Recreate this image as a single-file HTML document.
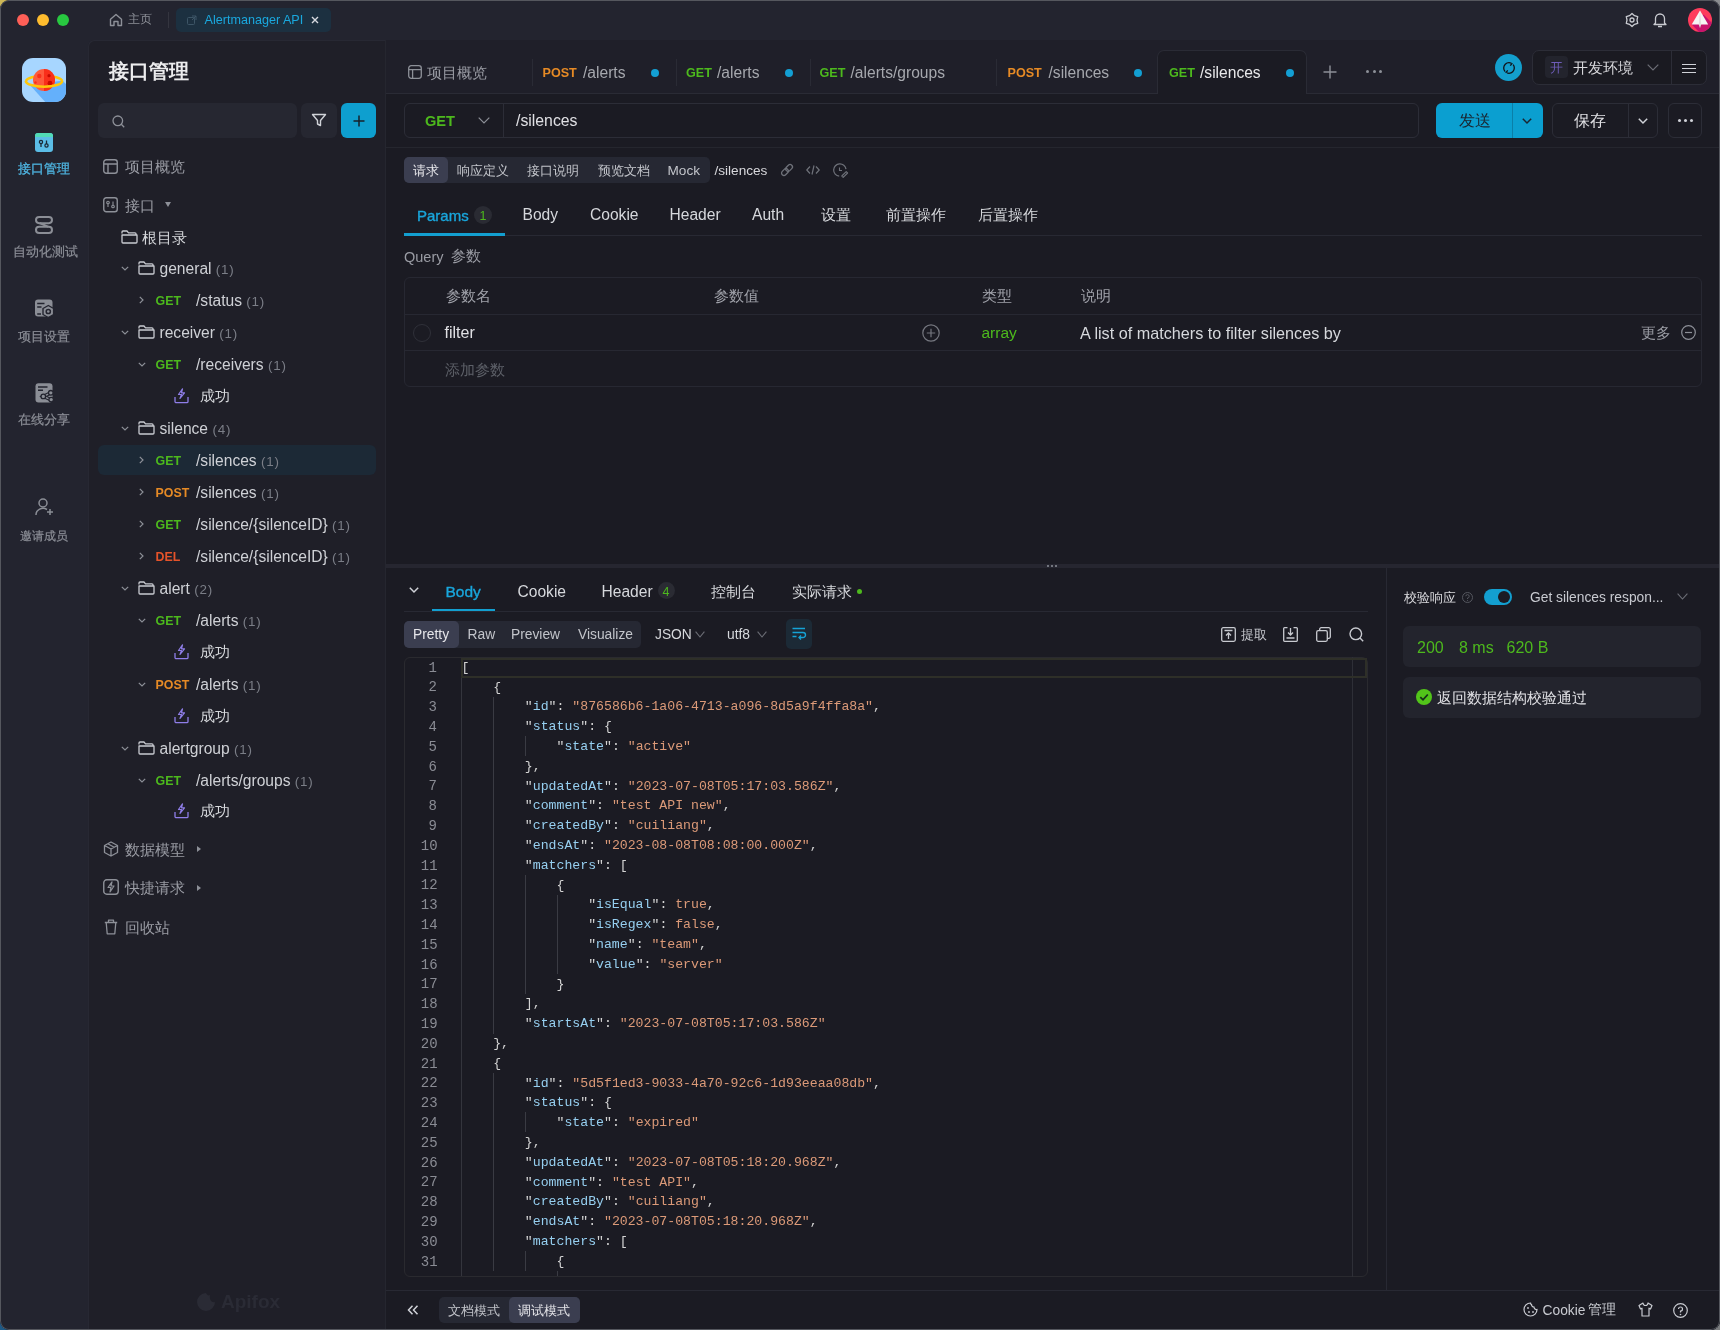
<!DOCTYPE html><html><head><meta charset="utf-8"><style>
*{box-sizing:border-box;margin:0;padding:0}
html,body{width:1720px;height:1330px;overflow:hidden;background:#2a2b33}
body{font-family:"Liberation Sans",sans-serif;color:#d0d2d8;position:relative}
.abs{position:absolute}
#win{will-change:transform;position:absolute;left:0;top:0;width:1720px;height:1330px;background:#23242f;border-radius:9px;overflow:hidden}
.t{position:absolute;white-space:nowrap;line-height:1}
svg{position:absolute;overflow:visible}
</style></head><body><div class="abs" style="left:0;top:0;width:14px;height:14px;background:#cdb757"></div>
<div class="abs" style="left:0;top:1316px;width:14px;height:14px;background:#1f5a86"></div>
<div class="abs" style="left:1706px;top:0;width:14px;height:14px;background:#8a8c90"></div>
<div class="abs" style="left:1706px;top:1316px;width:14px;height:14px;background:#7b7d80"></div>
<div id="win">
<div class="abs" style="left:17px;top:14px;width:12px;height:12px;background:#fe5f57;border-radius:6px;"></div>
<div class="abs" style="left:37px;top:14px;width:12px;height:12px;background:#febc2e;border-radius:6px;"></div>
<div class="abs" style="left:57px;top:14px;width:12px;height:12px;background:#28c840;border-radius:6px;"></div>
<svg style="left:109px;top:13px;" width="14" height="14" viewBox="0 0 14 14"><path d="M1.5 6.2 L7 1.5 L12.5 6.2 V12.5 H9 V8.5 H5 V12.5 H1.5 Z" fill="none" stroke="#8d9098" stroke-width="1.4" stroke-linejoin="round"/></svg>
<div class="t" style="left:128px;top:13.4px;font-size:12.2px;color:#8d9098;font-weight:400;">主页</div>
<div class="abs" style="left:168px;top:12px;width:1px;height:16px;background:#34353f;border-radius:0px;"></div>
<div class="abs" style="left:176px;top:8px;width:155px;height:24px;background:#1c3040;border-radius:5px;"></div>
<svg style="left:187px;top:15px;" width="10" height="10" viewBox="0 0 10 10"><rect x="0.5" y="2.5" width="7" height="7" rx="1" fill="none" stroke="#3d5566" stroke-width="1"/><path d="M5 1 H9 V5 M9 1 L5 5" fill="none" stroke="#3d5566" stroke-width="1"/></svg>
<div class="t" style="left:204.5px;top:14.4px;font-size:12.6px;color:#1aa8de;font-weight:400;">Alertmanager API</div>
<svg style="left:311px;top:16px;" width="8" height="8" viewBox="0 0 8 8"><path d="M1 1 L7 7 M7 1 L1 7" stroke="#d8dae0" stroke-width="1.4"/></svg>
<svg style="left:1625px;top:13px;" width="14" height="14" viewBox="0 0 14 14"><circle cx="7" cy="7" r="2" fill="none" stroke="#c8cad0" stroke-width="1.3"/><path d="M7.00 0.40 L9.50 2.67 L12.72 3.70 L12.00 7.00 L12.72 10.30 L9.50 11.33 L7.00 13.60 L4.50 11.33 L1.28 10.30 L2.00 7.00 L1.28 3.70 L4.50 2.67 Z" fill="none" stroke="#c8cad0" stroke-width="1.3" stroke-linejoin="round"/></svg>
<svg style="left:1653px;top:12px;" width="14" height="16" viewBox="0 0 14 16"><path d="M2.5 11 V6.5 A4.5 4.5 0 0 1 11.5 6.5 V11 L13 12.5 H1 L2.5 11 Z" fill="none" stroke="#c8cad0" stroke-width="1.3" stroke-linejoin="round"/><path d="M5 14.5 H9" stroke="#c8cad0" stroke-width="1.3"/></svg>
<svg style="left:1688px;top:8px;" width="24" height="24" viewBox="0 0 24 24"><defs><clipPath id="av"><circle cx="12" cy="12" r="12"/></clipPath></defs><g clip-path="url(#av)"><rect width="24" height="24" fill="#fe3c5c"/><path d="M3.7 16.4 L15.5 6.5 L26 17 L26 26 L13 26 Z" fill="#c8126e"/></g><path d="M12 2.5 L20.2 16.4 L3.7 16.4 Z" fill="#f6f4f4"/><path d="M12 2.5 L13.2 16.4 L12 20.3 L10.8 16.4 Z" fill="#e2dcdc"/></svg>
<div class="abs" style="left:22px;top:58px;width:44px;height:44px;border-radius:11px;background:#a7d6ff;overflow:hidden"><svg style="left:0;top:0" width="44" height="44" viewBox="0 0 44 44"><path d="M7.5 26.5 L40.5 22.8 L46 28 L46 46 L25 46 Z" fill="#64b0fb"/><path d="M4 23 A18.2 5.8 0 0 1 40.2 23" fill="none" stroke="#fec70a" stroke-width="2.6"/><circle cx="22" cy="22" r="11" fill="#fe5a3c"/><path d="M22 11 A11 11 0 0 1 22 33 Z" fill="#f92f1a"/><circle cx="17.3" cy="18" r="2.2" fill="#f8301b"/><circle cx="27" cy="17.7" r="1.6" fill="#c80a00"/><circle cx="28" cy="25.2" r="2.4" fill="#c80a00"/><circle cx="13.5" cy="24.5" r="1.2" fill="#f8301b"/><path d="M3.8 23 A18.2 5.8 0 0 0 40.2 23" fill="none" stroke="#fec70a" stroke-width="2.6"/></svg></div>
<svg style="left:35px;top:133px;" width="18" height="19" viewBox="0 0 18 19"><rect x="0" y="0" width="18" height="19" rx="3" fill="#5bbde6"/><path d="M0 3 A3 3 0 0 1 3 0 H15 A3 3 0 0 1 18 3 V4 H0 Z" fill="#51dbb5"/><circle cx="6" cy="9" r="1.6" fill="none" stroke="#1b2a36" stroke-width="1.3"/><path d="M6 10.6 V14" stroke="#1b2a36" stroke-width="1.3"/><circle cx="11.5" cy="12.5" r="1.6" fill="none" stroke="#1b2a36" stroke-width="1.3"/><path d="M11.5 7.5 V10.9" stroke="#1b2a36" stroke-width="1.3"/></svg>
<div class="t" style="left:18px;top:161.5px;font-size:13px;color:#4eb3df;font-weight:400;-webkit-text-stroke:0.3px #4eb3df;">接口管理</div>
<svg style="left:35px;top:216px;" width="18" height="18" viewBox="0 0 18 18"><rect x="1" y="1" width="16" height="6.2" rx="3.1" fill="none" stroke="#8b8e96" stroke-width="2"/><rect x="1" y="10.8" width="16" height="6.2" rx="3.1" fill="none" stroke="#8b8e96" stroke-width="2"/><path d="M4.5 7 L13.5 10.8" stroke="#8b8e96" stroke-width="2"/></svg>
<div class="t" style="left:12.5px;top:245.6px;font-size:12.8px;color:#8b8e96;font-weight:400;-webkit-text-stroke:0.2px #8b8e96;">自动化测试</div>
<svg style="left:35px;top:299px;" width="20" height="20" viewBox="0 0 20 20"><rect x="0" y="0.5" width="17.5" height="17" rx="3" fill="#8b8e96"/><path d="M2.2 4.5 H9.5 M2.2 8 H6.5 M2.2 15 H6" stroke="#23242f" stroke-width="1.5"/><path d="M13.3 6.5 L18.6 9.5 V15.5 L13.3 18.5 L8 15.5 V9.5 Z" fill="#8b8e96" stroke="#23242f" stroke-width="1.4" stroke-linejoin="round"/><circle cx="13.3" cy="12.5" r="2.1" fill="none" stroke="#23242f" stroke-width="1.5"/></svg>
<div class="t" style="left:18px;top:329.5px;font-size:13px;color:#8b8e96;font-weight:400;-webkit-text-stroke:0.2px #8b8e96;">项目设置</div>
<svg style="left:35px;top:383px;" width="20" height="20" viewBox="0 0 20 20"><rect x="0.5" y="0.3" width="17" height="19.3" rx="3" fill="#8b8e96"/><path d="M3 4 H12.5 M3 7.2 H8" stroke="#23242f" stroke-width="1.5"/><path d="M15.8 9.8 L8.5 13.4 L15.8 16.6" fill="none" stroke="#23242f" stroke-width="3.6"/><path d="M15.8 9.8 L8.5 13.4 L15.8 16.6" fill="none" stroke="#8b8e96" stroke-width="1.4"/><circle cx="15.8" cy="9.8" r="2.3" fill="#8b8e96" stroke="#23242f" stroke-width="1.3"/><circle cx="8.3" cy="13.4" r="2.3" fill="#8b8e96" stroke="#23242f" stroke-width="1.3"/><circle cx="16.2" cy="16.6" r="2.3" fill="#8b8e96" stroke="#23242f" stroke-width="1.3"/></svg>
<div class="t" style="left:18px;top:412.5px;font-size:13px;color:#8b8e96;font-weight:400;-webkit-text-stroke:0.2px #8b8e96;">在线分享</div>
<svg style="left:35px;top:498px;" width="19" height="18" viewBox="0 0 19 18"><circle cx="8" cy="5" r="4" fill="none" stroke="#8b8e96" stroke-width="1.5"/><path d="M1 17 A7 6.5 0 0 1 12 11.5" fill="none" stroke="#8b8e96" stroke-width="1.5"/><path d="M15 11 V17 M12 14 H18" stroke="#8b8e96" stroke-width="1.5"/></svg>
<div class="t" style="left:20px;top:529.5px;font-size:12px;color:#8b8e96;font-weight:400;-webkit-text-stroke:0.2px #8b8e96;">邀请成员</div>
<div class="abs" style="left:88px;top:40px;width:298px;height:1295px;background:#1f1f28;border-radius:6px 0 0 0;box-shadow:inset 1px 1px 0 #272833"></div>
<div class="t" style="left:109px;top:62.2px;font-size:19.5px;color:#ececee;font-weight:700;">接口管理</div>
<div class="abs" style="left:98px;top:103px;width:199px;height:35px;background:#262731;border-radius:6px;"></div>
<svg style="left:112px;top:115px;" width="13" height="13" viewBox="0 0 13 13"><circle cx="5.8" cy="5.8" r="4.8" fill="none" stroke="#8d9098" stroke-width="1.3"/><path d="M9.3 9.3 L12.2 12.2" stroke="#8d9098" stroke-width="1.3"/></svg>
<div class="abs" style="left:301px;top:103px;width:36px;height:35px;background:#262731;border-radius:6px;"></div>
<svg style="left:311px;top:112px;" width="16" height="16" viewBox="0 0 16 16"><path d="M1.5 2.5 H14.5 L9.5 8.5 V13.5 L6.5 12 V8.5 Z" fill="none" stroke="#d0d2d8" stroke-width="1.4" stroke-linejoin="round"/></svg>
<div class="abs" style="left:341px;top:103px;width:35px;height:35px;background:#0e9fcf;border-radius:6px;"></div>
<svg style="left:353px;top:115px;" width="12" height="12" viewBox="0 0 12 12"><path d="M6 0.5 V11.5 M0.5 6 H11.5" stroke="#17222c" stroke-width="1.5"/></svg>
<svg style="left:103px;top:159px;" width="15" height="15" viewBox="0 0 15 15"><rect x="0.75" y="0.75" width="13.5" height="13.5" rx="2.5" fill="none" stroke="#8d9098" stroke-width="1.4"/><path d="M0.75 5 H14.25 M5 5 V14.25" stroke="#8d9098" stroke-width="1.4"/></svg>
<div class="t" style="left:124.5px;top:159.0px;font-size:15px;color:#9a9ca4;font-weight:400;">项目概览</div>
<svg style="left:103px;top:197px;" width="15" height="16" viewBox="0 0 15 16"><rect x="0.75" y="0.75" width="13.5" height="14" rx="2.5" fill="none" stroke="#8d9098" stroke-width="1.4"/><circle cx="5" cy="5.5" r="1.3" fill="none" stroke="#8d9098" stroke-width="1.1"/><path d="M5 6.8 V10" stroke="#8d9098" stroke-width="1.1"/><circle cx="10" cy="9.5" r="1.3" fill="none" stroke="#8d9098" stroke-width="1.1"/><path d="M10 4.5 V8.2" stroke="#8d9098" stroke-width="1.1"/></svg>
<div class="t" style="left:124.5px;top:197.5px;font-size:15px;color:#9a9ca4;font-weight:400;">接口</div>
<svg style="left:165px;top:202px;" width="6" height="5" viewBox="0 0 6 5"><path d="M0 0 H6 L3 5 Z" fill="#8d9098"/></svg>
<svg style="left:121px;top:230px;" width="17" height="14" viewBox="0 0 17 14"><path d="M1 3.5 V2 A1 1 0 0 1 2 1 H6 L7.5 2.8 H14 A1 1 0 0 1 15 3.8 V5" fill="none" stroke="#c9cbd1" stroke-width="1.3" stroke-linejoin="round"/><path d="M1 5 H16 V12 A1 1 0 0 1 15 13 H2 A1 1 0 0 1 1 12 Z" fill="none" stroke="#c9cbd1" stroke-width="1.3" stroke-linejoin="round"/></svg>
<div class="t" style="left:142px;top:229.5px;font-size:15px;color:#d6d8dc;font-weight:400;">根目录</div>
<div class="abs" style="left:98px;top:445px;width:278px;height:30px;background:#1c2936;border-radius:6px;"></div>
<svg style="left:120.5px;top:265.5px;" width="8" height="5" viewBox="0 0 8 5"><path d="M0.8 0.8 L4 4 L7.2 0.8" fill="none" stroke="#8d9098" stroke-width="1.2"/></svg>
<svg style="left:137.5px;top:261px;" width="17" height="14" viewBox="0 0 17 14"><path d="M1 3.5 V2 A1 1 0 0 1 2 1 H6 L7.5 2.8 H14 A1 1 0 0 1 15 3.8 V5" fill="none" stroke="#c9cbd1" stroke-width="1.3" stroke-linejoin="round"/><path d="M1 5 H16 V12 A1 1 0 0 1 15 13 H2 A1 1 0 0 1 1 12 Z" fill="none" stroke="#c9cbd1" stroke-width="1.3" stroke-linejoin="round"/></svg>
<div class="t" style="left:159.5px;top:261.2px;font-size:15.6px;color:#cfd1d6">general <span style="color:#7b7e87;font-size:13.4px;letter-spacing:0.8px">(1)</span></div>
<svg style="left:139px;top:296px;" width="5" height="8" viewBox="0 0 5 8"><path d="M0.8 0.8 L4 4 L0.8 7.2" fill="none" stroke="#8d9098" stroke-width="1.2"/></svg>
<div class="t" style="left:155.5px;top:294.7px;font-size:12.4px;color:#4db91d;font-weight:700;">GET</div>
<div class="t" style="left:196px;top:293.2px;font-size:15.6px;color:#cfd1d6">/status <span style="color:#7b7e87;font-size:13.4px;letter-spacing:0.8px">(1)</span></div>
<svg style="left:120.5px;top:329.5px;" width="8" height="5" viewBox="0 0 8 5"><path d="M0.8 0.8 L4 4 L7.2 0.8" fill="none" stroke="#8d9098" stroke-width="1.2"/></svg>
<svg style="left:137.5px;top:325px;" width="17" height="14" viewBox="0 0 17 14"><path d="M1 3.5 V2 A1 1 0 0 1 2 1 H6 L7.5 2.8 H14 A1 1 0 0 1 15 3.8 V5" fill="none" stroke="#c9cbd1" stroke-width="1.3" stroke-linejoin="round"/><path d="M1 5 H16 V12 A1 1 0 0 1 15 13 H2 A1 1 0 0 1 1 12 Z" fill="none" stroke="#c9cbd1" stroke-width="1.3" stroke-linejoin="round"/></svg>
<div class="t" style="left:159.5px;top:325.2px;font-size:15.6px;color:#cfd1d6">receiver <span style="color:#7b7e87;font-size:13.4px;letter-spacing:0.8px">(1)</span></div>
<svg style="left:138px;top:361.5px;" width="8" height="5" viewBox="0 0 8 5"><path d="M0.8 0.8 L4 4 L7.2 0.8" fill="none" stroke="#8d9098" stroke-width="1.2"/></svg>
<div class="t" style="left:155.5px;top:358.7px;font-size:12.4px;color:#4db91d;font-weight:700;">GET</div>
<div class="t" style="left:196px;top:357.2px;font-size:15.6px;color:#cfd1d6">/receivers <span style="color:#7b7e87;font-size:13.4px;letter-spacing:0.8px">(1)</span></div>
<svg style="left:174px;top:388px;" width="15" height="16" viewBox="0 0 15 16"><path d="M8.5 0.8 L4.5 6.5 H7.5 L6 10.5 L10.5 4.8 H7.5 Z" fill="none" stroke="#8f7ee8" stroke-width="1.2" stroke-linejoin="round"/><path d="M1 9 V13.5 A1.2 1.2 0 0 0 2.2 14.7 H12.8 A1.2 1.2 0 0 0 14 13.5 V9" fill="none" stroke="#8f7ee8" stroke-width="1.3"/></svg>
<div class="t" style="left:199.5px;top:388.0px;font-size:15px;color:#d6d8dc;font-weight:400;">成功</div>
<svg style="left:120.5px;top:425.5px;" width="8" height="5" viewBox="0 0 8 5"><path d="M0.8 0.8 L4 4 L7.2 0.8" fill="none" stroke="#8d9098" stroke-width="1.2"/></svg>
<svg style="left:137.5px;top:421px;" width="17" height="14" viewBox="0 0 17 14"><path d="M1 3.5 V2 A1 1 0 0 1 2 1 H6 L7.5 2.8 H14 A1 1 0 0 1 15 3.8 V5" fill="none" stroke="#c9cbd1" stroke-width="1.3" stroke-linejoin="round"/><path d="M1 5 H16 V12 A1 1 0 0 1 15 13 H2 A1 1 0 0 1 1 12 Z" fill="none" stroke="#c9cbd1" stroke-width="1.3" stroke-linejoin="round"/></svg>
<div class="t" style="left:159.5px;top:421.2px;font-size:15.6px;color:#cfd1d6">silence <span style="color:#7b7e87;font-size:13.4px;letter-spacing:0.8px">(4)</span></div>
<svg style="left:139px;top:456px;" width="5" height="8" viewBox="0 0 5 8"><path d="M0.8 0.8 L4 4 L0.8 7.2" fill="none" stroke="#8d9098" stroke-width="1.2"/></svg>
<div class="t" style="left:155.5px;top:454.7px;font-size:12.4px;color:#4db91d;font-weight:700;">GET</div>
<div class="t" style="left:196px;top:453.2px;font-size:15.6px;color:#cfd1d6">/silences <span style="color:#7b7e87;font-size:13.4px;letter-spacing:0.8px">(1)</span></div>
<svg style="left:139px;top:488px;" width="5" height="8" viewBox="0 0 5 8"><path d="M0.8 0.8 L4 4 L0.8 7.2" fill="none" stroke="#8d9098" stroke-width="1.2"/></svg>
<div class="t" style="left:155.5px;top:486.7px;font-size:12.4px;color:#e68a25;font-weight:700;">POST</div>
<div class="t" style="left:196px;top:485.2px;font-size:15.6px;color:#cfd1d6">/silences <span style="color:#7b7e87;font-size:13.4px;letter-spacing:0.8px">(1)</span></div>
<svg style="left:139px;top:520px;" width="5" height="8" viewBox="0 0 5 8"><path d="M0.8 0.8 L4 4 L0.8 7.2" fill="none" stroke="#8d9098" stroke-width="1.2"/></svg>
<div class="t" style="left:155.5px;top:518.7px;font-size:12.4px;color:#4db91d;font-weight:700;">GET</div>
<div class="t" style="left:196px;top:517.2px;font-size:15.6px;color:#cfd1d6">/silence/{silenceID} <span style="color:#7b7e87;font-size:13.4px;letter-spacing:0.8px">(1)</span></div>
<svg style="left:139px;top:552px;" width="5" height="8" viewBox="0 0 5 8"><path d="M0.8 0.8 L4 4 L0.8 7.2" fill="none" stroke="#8d9098" stroke-width="1.2"/></svg>
<div class="t" style="left:155.5px;top:550.7px;font-size:12.4px;color:#e5532a;font-weight:700;">DEL</div>
<div class="t" style="left:196px;top:549.2px;font-size:15.6px;color:#cfd1d6">/silence/{silenceID} <span style="color:#7b7e87;font-size:13.4px;letter-spacing:0.8px">(1)</span></div>
<svg style="left:120.5px;top:585.5px;" width="8" height="5" viewBox="0 0 8 5"><path d="M0.8 0.8 L4 4 L7.2 0.8" fill="none" stroke="#8d9098" stroke-width="1.2"/></svg>
<svg style="left:137.5px;top:581px;" width="17" height="14" viewBox="0 0 17 14"><path d="M1 3.5 V2 A1 1 0 0 1 2 1 H6 L7.5 2.8 H14 A1 1 0 0 1 15 3.8 V5" fill="none" stroke="#c9cbd1" stroke-width="1.3" stroke-linejoin="round"/><path d="M1 5 H16 V12 A1 1 0 0 1 15 13 H2 A1 1 0 0 1 1 12 Z" fill="none" stroke="#c9cbd1" stroke-width="1.3" stroke-linejoin="round"/></svg>
<div class="t" style="left:159.5px;top:581.2px;font-size:15.6px;color:#cfd1d6">alert <span style="color:#7b7e87;font-size:13.4px;letter-spacing:0.8px">(2)</span></div>
<svg style="left:138px;top:617.5px;" width="8" height="5" viewBox="0 0 8 5"><path d="M0.8 0.8 L4 4 L7.2 0.8" fill="none" stroke="#8d9098" stroke-width="1.2"/></svg>
<div class="t" style="left:155.5px;top:614.7px;font-size:12.4px;color:#4db91d;font-weight:700;">GET</div>
<div class="t" style="left:196px;top:613.2px;font-size:15.6px;color:#cfd1d6">/alerts <span style="color:#7b7e87;font-size:13.4px;letter-spacing:0.8px">(1)</span></div>
<svg style="left:174px;top:644px;" width="15" height="16" viewBox="0 0 15 16"><path d="M8.5 0.8 L4.5 6.5 H7.5 L6 10.5 L10.5 4.8 H7.5 Z" fill="none" stroke="#8f7ee8" stroke-width="1.2" stroke-linejoin="round"/><path d="M1 9 V13.5 A1.2 1.2 0 0 0 2.2 14.7 H12.8 A1.2 1.2 0 0 0 14 13.5 V9" fill="none" stroke="#8f7ee8" stroke-width="1.3"/></svg>
<div class="t" style="left:199.5px;top:644.0px;font-size:15px;color:#d6d8dc;font-weight:400;">成功</div>
<svg style="left:138px;top:681.5px;" width="8" height="5" viewBox="0 0 8 5"><path d="M0.8 0.8 L4 4 L7.2 0.8" fill="none" stroke="#8d9098" stroke-width="1.2"/></svg>
<div class="t" style="left:155.5px;top:678.7px;font-size:12.4px;color:#e68a25;font-weight:700;">POST</div>
<div class="t" style="left:196px;top:677.2px;font-size:15.6px;color:#cfd1d6">/alerts <span style="color:#7b7e87;font-size:13.4px;letter-spacing:0.8px">(1)</span></div>
<svg style="left:174px;top:708px;" width="15" height="16" viewBox="0 0 15 16"><path d="M8.5 0.8 L4.5 6.5 H7.5 L6 10.5 L10.5 4.8 H7.5 Z" fill="none" stroke="#8f7ee8" stroke-width="1.2" stroke-linejoin="round"/><path d="M1 9 V13.5 A1.2 1.2 0 0 0 2.2 14.7 H12.8 A1.2 1.2 0 0 0 14 13.5 V9" fill="none" stroke="#8f7ee8" stroke-width="1.3"/></svg>
<div class="t" style="left:199.5px;top:708.0px;font-size:15px;color:#d6d8dc;font-weight:400;">成功</div>
<svg style="left:120.5px;top:745.5px;" width="8" height="5" viewBox="0 0 8 5"><path d="M0.8 0.8 L4 4 L7.2 0.8" fill="none" stroke="#8d9098" stroke-width="1.2"/></svg>
<svg style="left:137.5px;top:741px;" width="17" height="14" viewBox="0 0 17 14"><path d="M1 3.5 V2 A1 1 0 0 1 2 1 H6 L7.5 2.8 H14 A1 1 0 0 1 15 3.8 V5" fill="none" stroke="#c9cbd1" stroke-width="1.3" stroke-linejoin="round"/><path d="M1 5 H16 V12 A1 1 0 0 1 15 13 H2 A1 1 0 0 1 1 12 Z" fill="none" stroke="#c9cbd1" stroke-width="1.3" stroke-linejoin="round"/></svg>
<div class="t" style="left:159.5px;top:741.2px;font-size:15.6px;color:#cfd1d6">alertgroup <span style="color:#7b7e87;font-size:13.4px;letter-spacing:0.8px">(1)</span></div>
<svg style="left:138px;top:777.5px;" width="8" height="5" viewBox="0 0 8 5"><path d="M0.8 0.8 L4 4 L7.2 0.8" fill="none" stroke="#8d9098" stroke-width="1.2"/></svg>
<div class="t" style="left:155.5px;top:774.7px;font-size:12.4px;color:#4db91d;font-weight:700;">GET</div>
<div class="t" style="left:196px;top:773.2px;font-size:15.6px;color:#cfd1d6">/alerts/groups <span style="color:#7b7e87;font-size:13.4px;letter-spacing:0.8px">(1)</span></div>
<svg style="left:174px;top:803px;" width="15" height="16" viewBox="0 0 15 16"><path d="M8.5 0.8 L4.5 6.5 H7.5 L6 10.5 L10.5 4.8 H7.5 Z" fill="none" stroke="#8f7ee8" stroke-width="1.2" stroke-linejoin="round"/><path d="M1 9 V13.5 A1.2 1.2 0 0 0 2.2 14.7 H12.8 A1.2 1.2 0 0 0 14 13.5 V9" fill="none" stroke="#8f7ee8" stroke-width="1.3"/></svg>
<div class="t" style="left:199.5px;top:803.0px;font-size:15px;color:#d6d8dc;font-weight:400;">成功</div>
<svg style="left:103px;top:841px;" width="16" height="16" viewBox="0 0 16 16"><path d="M8 1 L14.5 4.5 V11.5 L8 15 L1.5 11.5 V4.5 Z M1.5 4.5 L8 8 L14.5 4.5 M8 8 V15 M4.8 2.8 L11.2 6.3" fill="none" stroke="#8d9098" stroke-width="1.3" stroke-linejoin="round"/></svg>
<div class="t" style="left:124.5px;top:841.5px;font-size:15px;color:#9a9ca4;font-weight:400;">数据模型</div>
<svg style="left:197px;top:846px;" width="4" height="6" viewBox="0 0 4 6"><path d="M0 0 L4 3 L0 6 Z" fill="#8d9098"/></svg>
<svg style="left:103px;top:879px;" width="16" height="16" viewBox="0 0 16 16"><rect x="0.75" y="0.75" width="14.5" height="14.5" rx="3" fill="none" stroke="#8d9098" stroke-width="1.4"/><path d="M9 2.8 L5 8.5 H8 L7 13 L11 7 H8 Z" fill="none" stroke="#8d9098" stroke-width="1.2" stroke-linejoin="round"/></svg>
<div class="t" style="left:124.5px;top:880.0px;font-size:15px;color:#9a9ca4;font-weight:400;">快捷请求</div>
<svg style="left:197px;top:884.5px;" width="4" height="6" viewBox="0 0 4 6"><path d="M0 0 L4 3 L0 6 Z" fill="#8d9098"/></svg>
<svg style="left:104px;top:919px;" width="14" height="16" viewBox="0 0 14 16"><path d="M0.8 3.5 H13.2 M4.5 3.5 V1.2 H9.5 V3.5 M2.2 3.5 L3.2 14.8 H10.8 L11.8 3.5" fill="none" stroke="#8d9098" stroke-width="1.3" stroke-linejoin="round"/></svg>
<div class="t" style="left:124.5px;top:919.5px;font-size:15px;color:#9a9ca4;font-weight:400;">回收站</div>
<svg style="left:195px;top:1291px;" width="22" height="20" viewBox="0 0 22 20"><path d="M11 2 A9 9 0 1 0 20 11 C17 12 14 9 15 4 C13.5 5 12 4 11 2 Z" fill="#2a2b35"/></svg>
<div class="t" style="left:221px;top:1291.7px;font-size:19px;color:#2a2b35;font-weight:700;">Apifox</div>
<div class="abs" style="left:385px;top:40px;width:1335px;height:1290px;background:#1b1b23;border-left:1px solid #25262f"></div>
<div class="abs" style="left:386px;top:40px;width:1334px;height:53px;background:#1f1f29;border-radius:0px;"></div>
<div class="abs" style="left:386px;top:93px;width:1334px;height:1px;background:#2a2b35;border-radius:0px;"></div>
<svg style="left:408px;top:65px;" width="14" height="14" viewBox="0 0 14 14"><rect x="0.7" y="0.7" width="12.6" height="12.6" rx="2.5" fill="none" stroke="#8d9098" stroke-width="1.3"/><path d="M0.7 4.6 H13.3 M4.6 4.6 V13.3" stroke="#8d9098" stroke-width="1.3"/></svg>
<div class="t" style="left:427px;top:64.5px;font-size:15px;color:#9a9ca4;font-weight:400;">项目概览</div>
<div class="abs" style="left:531.5px;top:59px;width:1px;height:27px;background:#2a2b35;border-radius:0px;"></div>
<div class="abs" style="left:675.5px;top:59px;width:1px;height:27px;background:#2a2b35;border-radius:0px;"></div>
<div class="abs" style="left:809.5px;top:59px;width:1px;height:27px;background:#2a2b35;border-radius:0px;"></div>
<div class="abs" style="left:996px;top:59px;width:1px;height:27px;background:#2a2b35;border-radius:0px;"></div>
<div class="t" style="left:542.5px;top:66.9px;font-size:12.6px;color:#e68a25;font-weight:700;">POST</div>
<div class="t" style="left:583px;top:64.9px;font-size:15.6px;color:#a6a8ae;font-weight:400;">/alerts</div>
<div class="abs" style="left:651px;top:69px;width:8px;height:8px;background:#139fd3;border-radius:4px;"></div>
<div class="t" style="left:686px;top:66.9px;font-size:12.6px;color:#4db91d;font-weight:700;">GET</div>
<div class="t" style="left:717px;top:64.9px;font-size:15.6px;color:#a6a8ae;font-weight:400;">/alerts</div>
<div class="abs" style="left:785px;top:69px;width:8px;height:8px;background:#139fd3;border-radius:4px;"></div>
<div class="t" style="left:819.5px;top:66.9px;font-size:12.6px;color:#4db91d;font-weight:700;">GET</div>
<div class="t" style="left:850.5px;top:64.9px;font-size:15.6px;color:#a6a8ae;font-weight:400;">/alerts/groups</div>
<div class="abs" style="left:9995px;top:69px;width:8px;height:8px;background:#139fd3;border-radius:4px;"></div>
<div class="t" style="left:1007.5px;top:66.9px;font-size:12.6px;color:#e68a25;font-weight:700;">POST</div>
<div class="t" style="left:1048.5px;top:64.9px;font-size:15.6px;color:#a6a8ae;font-weight:400;">/silences</div>
<div class="abs" style="left:1134px;top:69px;width:8px;height:8px;background:#139fd3;border-radius:4px;"></div>
<div class="abs" style="left:1157px;top:50px;width:150px;height:44px;background:#1b1b23;border:1px solid #2a2b35;border-bottom:none;border-radius:7px 7px 0 0"></div>
<div class="t" style="left:1169px;top:66.9px;font-size:12.6px;color:#4db91d;font-weight:700;">GET</div>
<div class="t" style="left:1200px;top:64.9px;font-size:15.6px;color:#e8e8ea;font-weight:400;">/silences</div>
<div class="abs" style="left:1286px;top:69px;width:8px;height:8px;background:#139fd3;border-radius:4px;"></div>
<svg style="left:1323px;top:65px;" width="14" height="14" viewBox="0 0 14 14"><path d="M7 0.5 V13.5 M0.5 7 H13.5" stroke="#8d9098" stroke-width="1.4"/></svg>
<div class="abs" style="left:1366.0px;top:70px;width:3px;height:3px;background:#8d9098;border-radius:1.5px;"></div>
<div class="abs" style="left:1372.5px;top:70px;width:3px;height:3px;background:#8d9098;border-radius:1.5px;"></div>
<div class="abs" style="left:1379.0px;top:70px;width:3px;height:3px;background:#8d9098;border-radius:1.5px;"></div>
<div class="abs" style="left:1495px;top:54px;width:27px;height:27px;background:#139fcd;border-radius:13.5px;"></div>
<svg style="left:1502px;top:60.5px;" width="14" height="14" viewBox="0 0 14 14"><circle cx="7" cy="7" r="5.3" fill="none" stroke="#111318" stroke-width="1.3" stroke-dasharray="10.1 2.2 14.45 2.2 4.35 0"/><path d="M10.3 2.1 L8.3 4.7 M3.7 11.9 L5.7 9.3" stroke="#111318" stroke-width="1.3"/></svg>
<div class="abs" style="left:1532px;top:50px;width:175px;height:35px;background:#1a1a21;border:1px solid #2c2d37;border-radius:7px"></div>
<div class="abs" style="left:1671px;top:51px;width:1px;height:33px;background:#2c2d37;border-radius:0px;"></div>
<div class="abs" style="left:1544.5px;top:56px;width:23px;height:22px;background:#23242d;border-radius:4px;"></div>
<div class="t" style="left:1549.5px;top:60.5px;font-size:13px;color:#6e5cb8;font-weight:400;">开</div>
<div class="t" style="left:1573px;top:59.9px;font-size:15.2px;color:#d8d8dc;font-weight:400;">开发环境</div>
<svg style="left:1647px;top:63.5px;" width="12" height="7" viewBox="0 0 12 7"><path d="M0.7 0.7 L6 6 L11.3 0.7" fill="none" stroke="#6c6e76" stroke-width="1.2"/></svg>
<div class="abs" style="left:1682px;top:63.5px;width:14px;height:1.6px;background:#d0d2d8;border-radius:0px;"></div>
<div class="abs" style="left:1682px;top:67.5px;width:14px;height:1.6px;background:#d0d2d8;border-radius:0px;"></div>
<div class="abs" style="left:1682px;top:71.5px;width:14px;height:1.6px;background:#d0d2d8;border-radius:0px;"></div>
<div class="abs" style="left:404px;top:103px;width:1015px;height:35px;border:1px solid #2c2d37;border-radius:6px"></div>
<div class="abs" style="left:503px;top:104px;width:1px;height:33px;background:#2c2d37;border-radius:0px;"></div>
<div class="t" style="left:425px;top:113.9px;font-size:14.6px;color:#4db91d;font-weight:700;">GET</div>
<svg style="left:478px;top:116.5px;" width="12" height="7" viewBox="0 0 12 7"><path d="M0.7 0.7 L6 6 L11.3 0.7" fill="none" stroke="#8d9098" stroke-width="1.2"/></svg>
<div class="t" style="left:516px;top:113.3px;font-size:15.8px;color:#e0e0e4;font-weight:400;">/silences</div>
<div class="abs" style="left:1436px;top:103px;width:107px;height:35px;background:#0b9fd0;border-radius:6px;"></div>
<div class="abs" style="left:1512px;top:103px;width:1px;height:35px;background:#0a7fa8;border-radius:0px;"></div>
<div class="t" style="left:1459px;top:112.8px;font-size:15.5px;color:#1a2530;font-weight:400;">发送</div>
<svg style="left:1522px;top:117.5px;" width="10" height="6" viewBox="0 0 10 6"><path d="M0.8 0.8 L5 5 L9.2 0.8" fill="none" stroke="#1a2530" stroke-width="1.5"/></svg>
<div class="abs" style="left:1552px;top:103px;width:106px;height:35px;border:1px solid #2c2d37;border-radius:6px"></div>
<div class="abs" style="left:1628px;top:104px;width:1px;height:33px;background:#2c2d37;border-radius:0px;"></div>
<div class="t" style="left:1574px;top:112.8px;font-size:15.5px;color:#e0e0e4;font-weight:400;">保存</div>
<svg style="left:1638px;top:117.5px;" width="10" height="6" viewBox="0 0 10 6"><path d="M0.8 0.8 L5 5 L9.2 0.8" fill="none" stroke="#d0d2d8" stroke-width="1.5"/></svg>
<div class="abs" style="left:1668px;top:103px;width:34px;height:35px;border:1px solid #2c2d37;border-radius:6px"></div>
<div class="abs" style="left:1677.5px;top:119px;width:3.2px;height:3.2px;background:#d0d2d8;border-radius:1.6px;"></div>
<div class="abs" style="left:1683.5px;top:119px;width:3.2px;height:3.2px;background:#d0d2d8;border-radius:1.6px;"></div>
<div class="abs" style="left:1689.5px;top:119px;width:3.2px;height:3.2px;background:#d0d2d8;border-radius:1.6px;"></div>
<div class="abs" style="left:386px;top:147px;width:1334px;height:1px;background:#25262e;border-radius:0px;"></div>
<div class="abs" style="left:404px;top:157px;width:306px;height:26px;background:#262833;border-radius:5px;"></div>
<div class="abs" style="left:404px;top:157px;width:44px;height:26px;background:#3b3e50;border-radius:5px;"></div>
<div class="t" style="left:412.5px;top:163.5px;font-size:13px;color:#e6e6ea;font-weight:400;">请求</div>
<div class="t" style="left:456.5px;top:163.5px;font-size:13px;color:#c2c4ca;font-weight:400;">响应定义</div>
<div class="t" style="left:527px;top:163.5px;font-size:13px;color:#c2c4ca;font-weight:400;">接口说明</div>
<div class="t" style="left:597.5px;top:163.5px;font-size:13px;color:#c2c4ca;font-weight:400;">预览文档</div>
<div class="t" style="left:667.5px;top:163.9px;font-size:13.6px;color:#c2c4ca;font-weight:400;">Mock</div>
<div class="t" style="left:714.5px;top:163.9px;font-size:13.6px;color:#d8d8dc;font-weight:400;">/silences</div>
<svg style="left:780px;top:162.5px;" width="14" height="14" viewBox="0 0 14 14"><g transform="rotate(-45 7 7)" fill="none" stroke="#6f727a" stroke-width="1.3"><rect x="0.3" y="4.6" width="7.6" height="4.8" rx="2.4"/><rect x="6.1" y="4.6" width="7.6" height="4.8" rx="2.4"/></g></svg>
<svg style="left:806px;top:164px;" width="14" height="12" viewBox="0 0 14 12"><path d="M4 2.5 L0.8 6 L4 9.5 M10 2.5 L13.2 6 L10 9.5 M8 1.5 L6 10.5" fill="none" stroke="#6f727a" stroke-width="1.2"/></svg>
<svg style="left:833px;top:162.5px;" width="14" height="14" viewBox="0 0 14 14"><path d="M6.2 13.2 A6.2 6.2 0 1 1 13 6.2" fill="none" stroke="#6f727a" stroke-width="1.2"/><path d="M6.5 4.5 V7.5 H9" fill="none" stroke="#6f727a" stroke-width="1.1"/><path d="M8.8 13 L13.2 8.6 L14.6 10 L10.2 14.4 Z" fill="none" stroke="#6f727a" stroke-width="1.1" stroke-linejoin="round"/></svg>
<div class="t" style="left:417px;top:207.7px;font-size:15px;color:#19a6dc;font-weight:400;-webkit-text-stroke:0.35px #19a6dc;">Params</div>
<div class="abs" style="left:474px;top:205.5px;width:18px;height:18px;background:#2a2b33;border-radius:9px;"></div>
<div class="t" style="left:479.5px;top:209.9px;font-size:12.5px;color:#4db91d;font-weight:400;">1</div>
<div class="abs" style="left:404px;top:233px;width:101px;height:3px;background:#139fd0;border-radius:0px;"></div>
<div class="abs" style="left:505px;top:235px;width:1197px;height:1px;background:#282933;border-radius:0px;"></div>
<div class="t" style="left:522.5px;top:207.4px;font-size:15.6px;color:#d6d8dc;font-weight:400;">Body</div>
<div class="t" style="left:590px;top:207.4px;font-size:15.6px;color:#d6d8dc;font-weight:400;">Cookie</div>
<div class="t" style="left:669.5px;top:207.4px;font-size:15.6px;color:#d6d8dc;font-weight:400;">Header</div>
<div class="t" style="left:752px;top:207.4px;font-size:15.6px;color:#d6d8dc;font-weight:400;">Auth</div>
<div class="t" style="left:820.5px;top:206.8px;font-size:15.3px;color:#d6d8dc;font-weight:400;">设置</div>
<div class="t" style="left:886px;top:206.8px;font-size:15.3px;color:#d6d8dc;font-weight:400;">前置操作</div>
<div class="t" style="left:978px;top:206.8px;font-size:15.3px;color:#d6d8dc;font-weight:400;">后置操作</div>
<div class="t" style="left:404px;top:249.9px;font-size:14.5px;color:#9a9ca4;font-weight:400;">Query</div>
<div class="t" style="left:451px;top:249.2px;font-size:14.5px;color:#9a9ca4;font-weight:400;">参数</div>
<div class="abs" style="left:404px;top:277px;width:1298px;height:110px;border:1px solid #272832;border-radius:6px"></div>
<div class="abs" style="left:405px;top:314px;width:1296px;height:1px;background:#272832;border-radius:0px;"></div>
<div class="abs" style="left:405px;top:350px;width:1296px;height:1px;background:#272832;border-radius:0px;"></div>
<div class="t" style="left:445.5px;top:289.2px;font-size:14.6px;color:#a0a2aa;font-weight:400;">参数名</div>
<div class="t" style="left:713.5px;top:289.2px;font-size:14.6px;color:#a0a2aa;font-weight:400;">参数值</div>
<div class="t" style="left:981.5px;top:289.2px;font-size:14.6px;color:#a0a2aa;font-weight:400;">类型</div>
<div class="t" style="left:1081px;top:289.2px;font-size:14.6px;color:#a0a2aa;font-weight:400;">说明</div>
<div class="abs" style="left:413px;top:324px;width:18px;height:18px;background:none;border-radius:9px;border:1px solid #2f3039;"></div>
<div class="t" style="left:444.5px;top:325.2px;font-size:16px;color:#e0e0e4;font-weight:400;">filter</div>
<svg style="left:922px;top:324px;" width="18" height="18" viewBox="0 0 18 18"><circle cx="9" cy="9" r="8.2" fill="none" stroke="#75777f" stroke-width="1.2"/><path d="M9 4.8 V13.2 M4.8 9 H13.2" stroke="#75777f" stroke-width="1.2"/></svg>
<div class="t" style="left:981.5px;top:325.4px;font-size:15.5px;color:#4db91d;font-weight:400;">array</div>
<div class="t" style="left:1080px;top:325.1px;font-size:16.2px;color:#d6d8dc;font-weight:400;">A list of matchers to filter silences by</div>
<div class="t" style="left:1641px;top:325.0px;font-size:15px;color:#9a9ca4;font-weight:400;">更多</div>
<svg style="left:1681px;top:324.5px;" width="15" height="15" viewBox="0 0 15 15"><circle cx="7.5" cy="7.5" r="6.8" fill="none" stroke="#8d9098" stroke-width="1.2"/><path d="M4 7.5 H11" stroke="#8d9098" stroke-width="1.2"/></svg>
<div class="t" style="left:444.5px;top:362.0px;font-size:15px;color:#5d6068;font-weight:400;">添加参数</div>
<div class="abs" style="left:386px;top:564px;width:1334px;height:4px;background:#262630;border-radius:0px;"></div>
<div class="abs" style="left:1047px;top:565px;width:2px;height:2px;background:#8d9098;border-radius:1px;"></div>
<div class="abs" style="left:1051px;top:565px;width:2px;height:2px;background:#8d9098;border-radius:1px;"></div>
<div class="abs" style="left:1055px;top:565px;width:2px;height:2px;background:#8d9098;border-radius:1px;"></div>
<svg style="left:409px;top:586.5px;" width="10" height="6" viewBox="0 0 10 6"><path d="M0.8 0.8 L5 5 L9.2 0.8" fill="none" stroke="#d0d2d8" stroke-width="1.5"/></svg>
<div class="t" style="left:445.5px;top:584.0px;font-size:15.5px;color:#19a6dc;font-weight:400;-webkit-text-stroke:0.35px #19a6dc;">Body</div>
<div class="abs" style="left:432px;top:609px;width:63px;height:3px;background:#139fd0;border-radius:0px;"></div>
<div class="abs" style="left:404px;top:611px;width:964px;height:1px;background:#282933;border-radius:0px;"></div>
<div class="t" style="left:517.5px;top:583.9px;font-size:15.6px;color:#d6d8dc;font-weight:400;">Cookie</div>
<div class="t" style="left:601.5px;top:583.9px;font-size:15.6px;color:#d6d8dc;font-weight:400;">Header</div>
<div class="abs" style="left:658px;top:582px;width:17px;height:17px;background:#2a2b33;border-radius:8.5px;"></div>
<div class="t" style="left:662.5px;top:585.5px;font-size:12.5px;color:#4db91d;font-weight:400;">4</div>
<div class="t" style="left:711px;top:583.5px;font-size:15px;color:#d6d8dc;font-weight:400;">控制台</div>
<div class="t" style="left:792px;top:583.5px;font-size:15px;color:#d6d8dc;font-weight:400;">实际请求</div>
<div class="abs" style="left:857px;top:588.5px;width:5px;height:5px;background:#4db91d;border-radius:2.5px;"></div>
<div class="abs" style="left:404px;top:621px;width:237px;height:27px;background:#262833;border-radius:5px;"></div>
<div class="abs" style="left:404px;top:621px;width:55px;height:27px;background:#3b3e50;border-radius:5px;"></div>
<div class="t" style="left:413px;top:628.3px;font-size:13.8px;color:#e6e6ea;font-weight:400;">Pretty</div>
<div class="t" style="left:467.5px;top:628.3px;font-size:13.8px;color:#c2c4ca;font-weight:400;">Raw</div>
<div class="t" style="left:511px;top:628.3px;font-size:13.8px;color:#c2c4ca;font-weight:400;">Preview</div>
<div class="t" style="left:578px;top:628.3px;font-size:13.8px;color:#c2c4ca;font-weight:400;">Visualize</div>
<div class="t" style="left:655px;top:628.3px;font-size:13.8px;color:#d6d8dc;font-weight:400;">JSON</div>
<svg style="left:695px;top:630.5px;" width="10" height="7" viewBox="0 0 10 7"><path d="M0.6 0.6 L5 6 L9.4 0.6" fill="none" stroke="#6c6e76" stroke-width="1.1"/></svg>
<div class="t" style="left:727px;top:628.3px;font-size:13.8px;color:#d6d8dc;font-weight:400;">utf8</div>
<svg style="left:757px;top:630.5px;" width="10" height="7" viewBox="0 0 10 7"><path d="M0.6 0.6 L5 6 L9.4 0.6" fill="none" stroke="#6c6e76" stroke-width="1.1"/></svg>
<div class="abs" style="left:786px;top:619px;width:26px;height:30px;background:#1c2a36;border-radius:5px;"></div>
<svg style="left:792px;top:627px;" width="14" height="13" viewBox="0 0 14 13"><path d="M0.5 1.5 H13 M0.5 5.5 H11 A2.5 2.5 0 0 1 11 10.5 H7.5 M0.5 9.5 H4.5" fill="none" stroke="#15a3d6" stroke-width="1.4"/><path d="M9 8.5 L7 10.5 L9 12.5" fill="none" stroke="#15a3d6" stroke-width="1.3"/></svg>
<svg style="left:1221px;top:627px;" width="15" height="15" viewBox="0 0 15 15"><rect x="0.7" y="0.7" width="13.6" height="13.6" rx="1.5" fill="none" stroke="#c8cad0" stroke-width="1.3"/><path d="M3.5 3.5 H11.5 M7.5 12 V6 M5 8.5 L7.5 6 L10 8.5" fill="none" stroke="#c8cad0" stroke-width="1.3"/></svg>
<div class="t" style="left:1240.5px;top:628.8px;font-size:12.5px;color:#c8cad0;font-weight:400;">提取</div>
<svg style="left:1283px;top:627px;" width="15" height="15" viewBox="0 0 15 15"><path d="M4.5 0.7 H1.5 A0.8 0.8 0 0 0 0.7 1.5 V13.5 A0.8 0.8 0 0 0 1.5 14.3 H13.5 A0.8 0.8 0 0 0 14.3 13.5 V1.5 A0.8 0.8 0 0 0 13.5 0.7 H10.5" fill="none" stroke="#c8cad0" stroke-width="1.3"/><path d="M7.5 1 V8 M5 5.5 L7.5 8 L10 5.5 M3.5 11 H11.5" fill="none" stroke="#c8cad0" stroke-width="1.3"/></svg>
<svg style="left:1316px;top:627px;" width="15" height="15" viewBox="0 0 15 15"><rect x="0.7" y="3.7" width="10.6" height="10.6" rx="1.5" fill="none" stroke="#c8cad0" stroke-width="1.3"/><path d="M3.7 3.7 V2.2 A1.5 1.5 0 0 1 5.2 0.7 H12.8 A1.5 1.5 0 0 1 14.3 2.2 V9.8 A1.5 1.5 0 0 1 12.8 11.3 H11.3" fill="none" stroke="#c8cad0" stroke-width="1.3"/></svg>
<svg style="left:1349px;top:627px;" width="15" height="15" viewBox="0 0 15 15"><circle cx="6.8" cy="6.8" r="5.8" fill="none" stroke="#c8cad0" stroke-width="1.4"/><path d="M11 11 L14.2 14.2" stroke="#c8cad0" stroke-width="1.4"/></svg>
<div class="abs" style="left:404px;top:657px;width:964px;height:620px;border:1px solid #2a2a2f;border-radius:6px"></div>
<div class="abs" style="left:461px;top:677px;width:1px;height:599px;background:#34353d;border-radius:0px;"></div>
<div class="abs" style="left:1352px;top:657px;width:1px;height:620px;background:#2e2f37;border-radius:0px;"></div>
<div class="abs" style="left:461px;top:658px;width:906px;height:20px;border:2px solid #2e2f28"></div>
<div class="abs" style="left:493px;top:697px;width:1px;height:337px;background:#3a3b43;border-radius:0px;"></div>
<div class="abs" style="left:525px;top:736px;width:1px;height:20px;background:#3a3b43;border-radius:0px;"></div>
<div class="abs" style="left:525px;top:875px;width:1px;height:119px;background:#3a3b43;border-radius:0px;"></div>
<div class="abs" style="left:557px;top:895px;width:1px;height:79px;background:#3a3b43;border-radius:0px;"></div>
<div class="abs" style="left:493px;top:1073px;width:1px;height:198px;background:#3a3b43;border-radius:0px;"></div>
<div class="abs" style="left:525px;top:1112px;width:1px;height:20px;background:#3a3b43;border-radius:0px;"></div>
<div class="abs" style="left:525px;top:1251px;width:1px;height:20px;background:#3a3b43;border-radius:0px;"></div>
<div class="abs" style="left:557px;top:1271px;width:1px;height:5px;background:#3a3b43;border-radius:0px;"></div>
<div class="t" style="left:428.4px;top:660.5px;font-size:14px;color:#8a8c94;font-family:'Liberation Mono',monospace">1</div>
<div class="t" style="left:461.5px;top:660.8px;font-size:13.2px;color:#d4d4d4;font-family:'Liberation Mono',monospace;white-space:pre">[</div>
<div class="t" style="left:428.4px;top:680.3px;font-size:14px;color:#8a8c94;font-family:'Liberation Mono',monospace">2</div>
<div class="t" style="left:461.5px;top:680.6px;font-size:13.2px;color:#d4d4d4;font-family:'Liberation Mono',monospace;white-space:pre">    {</div>
<div class="t" style="left:428.4px;top:700.1px;font-size:14px;color:#8a8c94;font-family:'Liberation Mono',monospace">3</div>
<div class="t" style="left:461.5px;top:700.4px;font-size:13.2px;color:#d4d4d4;font-family:'Liberation Mono',monospace;white-space:pre">        <span style="color:#d4d4d4">&quot;</span><span style="color:#96cff0">id</span><span style="color:#d4d4d4">&quot;</span>: <span style="color:#dc9a78">&quot;876586b6-1a06-4713-a096-8d5a9f4ffa8a&quot;</span>,</div>
<div class="t" style="left:428.4px;top:719.9px;font-size:14px;color:#8a8c94;font-family:'Liberation Mono',monospace">4</div>
<div class="t" style="left:461.5px;top:720.2px;font-size:13.2px;color:#d4d4d4;font-family:'Liberation Mono',monospace;white-space:pre">        <span style="color:#d4d4d4">&quot;</span><span style="color:#96cff0">status</span><span style="color:#d4d4d4">&quot;</span>: {</div>
<div class="t" style="left:428.4px;top:739.7px;font-size:14px;color:#8a8c94;font-family:'Liberation Mono',monospace">5</div>
<div class="t" style="left:461.5px;top:740.0px;font-size:13.2px;color:#d4d4d4;font-family:'Liberation Mono',monospace;white-space:pre">            <span style="color:#d4d4d4">&quot;</span><span style="color:#96cff0">state</span><span style="color:#d4d4d4">&quot;</span>: <span style="color:#dc9a78">&quot;active&quot;</span></div>
<div class="t" style="left:428.4px;top:759.5px;font-size:14px;color:#8a8c94;font-family:'Liberation Mono',monospace">6</div>
<div class="t" style="left:461.5px;top:759.8px;font-size:13.2px;color:#d4d4d4;font-family:'Liberation Mono',monospace;white-space:pre">        },</div>
<div class="t" style="left:428.4px;top:779.3px;font-size:14px;color:#8a8c94;font-family:'Liberation Mono',monospace">7</div>
<div class="t" style="left:461.5px;top:779.6px;font-size:13.2px;color:#d4d4d4;font-family:'Liberation Mono',monospace;white-space:pre">        <span style="color:#d4d4d4">&quot;</span><span style="color:#96cff0">updatedAt</span><span style="color:#d4d4d4">&quot;</span>: <span style="color:#dc9a78">&quot;2023-07-08T05:17:03.586Z&quot;</span>,</div>
<div class="t" style="left:428.4px;top:799.1px;font-size:14px;color:#8a8c94;font-family:'Liberation Mono',monospace">8</div>
<div class="t" style="left:461.5px;top:799.4px;font-size:13.2px;color:#d4d4d4;font-family:'Liberation Mono',monospace;white-space:pre">        <span style="color:#d4d4d4">&quot;</span><span style="color:#96cff0">comment</span><span style="color:#d4d4d4">&quot;</span>: <span style="color:#dc9a78">&quot;test API new&quot;</span>,</div>
<div class="t" style="left:428.4px;top:818.9px;font-size:14px;color:#8a8c94;font-family:'Liberation Mono',monospace">9</div>
<div class="t" style="left:461.5px;top:819.2px;font-size:13.2px;color:#d4d4d4;font-family:'Liberation Mono',monospace;white-space:pre">        <span style="color:#d4d4d4">&quot;</span><span style="color:#96cff0">createdBy</span><span style="color:#d4d4d4">&quot;</span>: <span style="color:#dc9a78">&quot;cuiliang&quot;</span>,</div>
<div class="t" style="left:420.8px;top:838.7px;font-size:14px;color:#8a8c94;font-family:'Liberation Mono',monospace">10</div>
<div class="t" style="left:461.5px;top:839.0px;font-size:13.2px;color:#d4d4d4;font-family:'Liberation Mono',monospace;white-space:pre">        <span style="color:#d4d4d4">&quot;</span><span style="color:#96cff0">endsAt</span><span style="color:#d4d4d4">&quot;</span>: <span style="color:#dc9a78">&quot;2023-08-08T08:08:00.000Z&quot;</span>,</div>
<div class="t" style="left:420.8px;top:858.5px;font-size:14px;color:#8a8c94;font-family:'Liberation Mono',monospace">11</div>
<div class="t" style="left:461.5px;top:858.8px;font-size:13.2px;color:#d4d4d4;font-family:'Liberation Mono',monospace;white-space:pre">        <span style="color:#d4d4d4">&quot;</span><span style="color:#96cff0">matchers</span><span style="color:#d4d4d4">&quot;</span>: [</div>
<div class="t" style="left:420.8px;top:878.3px;font-size:14px;color:#8a8c94;font-family:'Liberation Mono',monospace">12</div>
<div class="t" style="left:461.5px;top:878.6px;font-size:13.2px;color:#d4d4d4;font-family:'Liberation Mono',monospace;white-space:pre">            {</div>
<div class="t" style="left:420.8px;top:898.1px;font-size:14px;color:#8a8c94;font-family:'Liberation Mono',monospace">13</div>
<div class="t" style="left:461.5px;top:898.4px;font-size:13.2px;color:#d4d4d4;font-family:'Liberation Mono',monospace;white-space:pre">                <span style="color:#d4d4d4">&quot;</span><span style="color:#96cff0">isEqual</span><span style="color:#d4d4d4">&quot;</span>: <span style="color:#dc9a78">true</span>,</div>
<div class="t" style="left:420.8px;top:917.9px;font-size:14px;color:#8a8c94;font-family:'Liberation Mono',monospace">14</div>
<div class="t" style="left:461.5px;top:918.2px;font-size:13.2px;color:#d4d4d4;font-family:'Liberation Mono',monospace;white-space:pre">                <span style="color:#d4d4d4">&quot;</span><span style="color:#96cff0">isRegex</span><span style="color:#d4d4d4">&quot;</span>: <span style="color:#dc9a78">false</span>,</div>
<div class="t" style="left:420.8px;top:937.7px;font-size:14px;color:#8a8c94;font-family:'Liberation Mono',monospace">15</div>
<div class="t" style="left:461.5px;top:938.0px;font-size:13.2px;color:#d4d4d4;font-family:'Liberation Mono',monospace;white-space:pre">                <span style="color:#d4d4d4">&quot;</span><span style="color:#96cff0">name</span><span style="color:#d4d4d4">&quot;</span>: <span style="color:#dc9a78">&quot;team&quot;</span>,</div>
<div class="t" style="left:420.8px;top:957.5px;font-size:14px;color:#8a8c94;font-family:'Liberation Mono',monospace">16</div>
<div class="t" style="left:461.5px;top:957.8px;font-size:13.2px;color:#d4d4d4;font-family:'Liberation Mono',monospace;white-space:pre">                <span style="color:#d4d4d4">&quot;</span><span style="color:#96cff0">value</span><span style="color:#d4d4d4">&quot;</span>: <span style="color:#dc9a78">&quot;server&quot;</span></div>
<div class="t" style="left:420.8px;top:977.3px;font-size:14px;color:#8a8c94;font-family:'Liberation Mono',monospace">17</div>
<div class="t" style="left:461.5px;top:977.6px;font-size:13.2px;color:#d4d4d4;font-family:'Liberation Mono',monospace;white-space:pre">            }</div>
<div class="t" style="left:420.8px;top:997.1px;font-size:14px;color:#8a8c94;font-family:'Liberation Mono',monospace">18</div>
<div class="t" style="left:461.5px;top:997.4px;font-size:13.2px;color:#d4d4d4;font-family:'Liberation Mono',monospace;white-space:pre">        ],</div>
<div class="t" style="left:420.8px;top:1016.9px;font-size:14px;color:#8a8c94;font-family:'Liberation Mono',monospace">19</div>
<div class="t" style="left:461.5px;top:1017.2px;font-size:13.2px;color:#d4d4d4;font-family:'Liberation Mono',monospace;white-space:pre">        <span style="color:#d4d4d4">&quot;</span><span style="color:#96cff0">startsAt</span><span style="color:#d4d4d4">&quot;</span>: <span style="color:#dc9a78">&quot;2023-07-08T05:17:03.586Z&quot;</span></div>
<div class="t" style="left:420.8px;top:1036.7px;font-size:14px;color:#8a8c94;font-family:'Liberation Mono',monospace">20</div>
<div class="t" style="left:461.5px;top:1037.0px;font-size:13.2px;color:#d4d4d4;font-family:'Liberation Mono',monospace;white-space:pre">    },</div>
<div class="t" style="left:420.8px;top:1056.5px;font-size:14px;color:#8a8c94;font-family:'Liberation Mono',monospace">21</div>
<div class="t" style="left:461.5px;top:1056.8px;font-size:13.2px;color:#d4d4d4;font-family:'Liberation Mono',monospace;white-space:pre">    {</div>
<div class="t" style="left:420.8px;top:1076.3px;font-size:14px;color:#8a8c94;font-family:'Liberation Mono',monospace">22</div>
<div class="t" style="left:461.5px;top:1076.6px;font-size:13.2px;color:#d4d4d4;font-family:'Liberation Mono',monospace;white-space:pre">        <span style="color:#d4d4d4">&quot;</span><span style="color:#96cff0">id</span><span style="color:#d4d4d4">&quot;</span>: <span style="color:#dc9a78">&quot;5d5f1ed3-9033-4a70-92c6-1d93eeaa08db&quot;</span>,</div>
<div class="t" style="left:420.8px;top:1096.1px;font-size:14px;color:#8a8c94;font-family:'Liberation Mono',monospace">23</div>
<div class="t" style="left:461.5px;top:1096.4px;font-size:13.2px;color:#d4d4d4;font-family:'Liberation Mono',monospace;white-space:pre">        <span style="color:#d4d4d4">&quot;</span><span style="color:#96cff0">status</span><span style="color:#d4d4d4">&quot;</span>: {</div>
<div class="t" style="left:420.8px;top:1115.9px;font-size:14px;color:#8a8c94;font-family:'Liberation Mono',monospace">24</div>
<div class="t" style="left:461.5px;top:1116.2px;font-size:13.2px;color:#d4d4d4;font-family:'Liberation Mono',monospace;white-space:pre">            <span style="color:#d4d4d4">&quot;</span><span style="color:#96cff0">state</span><span style="color:#d4d4d4">&quot;</span>: <span style="color:#dc9a78">&quot;expired&quot;</span></div>
<div class="t" style="left:420.8px;top:1135.7px;font-size:14px;color:#8a8c94;font-family:'Liberation Mono',monospace">25</div>
<div class="t" style="left:461.5px;top:1136.0px;font-size:13.2px;color:#d4d4d4;font-family:'Liberation Mono',monospace;white-space:pre">        },</div>
<div class="t" style="left:420.8px;top:1155.5px;font-size:14px;color:#8a8c94;font-family:'Liberation Mono',monospace">26</div>
<div class="t" style="left:461.5px;top:1155.8px;font-size:13.2px;color:#d4d4d4;font-family:'Liberation Mono',monospace;white-space:pre">        <span style="color:#d4d4d4">&quot;</span><span style="color:#96cff0">updatedAt</span><span style="color:#d4d4d4">&quot;</span>: <span style="color:#dc9a78">&quot;2023-07-08T05:18:20.968Z&quot;</span>,</div>
<div class="t" style="left:420.8px;top:1175.3px;font-size:14px;color:#8a8c94;font-family:'Liberation Mono',monospace">27</div>
<div class="t" style="left:461.5px;top:1175.6px;font-size:13.2px;color:#d4d4d4;font-family:'Liberation Mono',monospace;white-space:pre">        <span style="color:#d4d4d4">&quot;</span><span style="color:#96cff0">comment</span><span style="color:#d4d4d4">&quot;</span>: <span style="color:#dc9a78">&quot;test API&quot;</span>,</div>
<div class="t" style="left:420.8px;top:1195.1px;font-size:14px;color:#8a8c94;font-family:'Liberation Mono',monospace">28</div>
<div class="t" style="left:461.5px;top:1195.4px;font-size:13.2px;color:#d4d4d4;font-family:'Liberation Mono',monospace;white-space:pre">        <span style="color:#d4d4d4">&quot;</span><span style="color:#96cff0">createdBy</span><span style="color:#d4d4d4">&quot;</span>: <span style="color:#dc9a78">&quot;cuiliang&quot;</span>,</div>
<div class="t" style="left:420.8px;top:1214.9px;font-size:14px;color:#8a8c94;font-family:'Liberation Mono',monospace">29</div>
<div class="t" style="left:461.5px;top:1215.2px;font-size:13.2px;color:#d4d4d4;font-family:'Liberation Mono',monospace;white-space:pre">        <span style="color:#d4d4d4">&quot;</span><span style="color:#96cff0">endsAt</span><span style="color:#d4d4d4">&quot;</span>: <span style="color:#dc9a78">&quot;2023-07-08T05:18:20.968Z&quot;</span>,</div>
<div class="t" style="left:420.8px;top:1234.7px;font-size:14px;color:#8a8c94;font-family:'Liberation Mono',monospace">30</div>
<div class="t" style="left:461.5px;top:1235.0px;font-size:13.2px;color:#d4d4d4;font-family:'Liberation Mono',monospace;white-space:pre">        <span style="color:#d4d4d4">&quot;</span><span style="color:#96cff0">matchers</span><span style="color:#d4d4d4">&quot;</span>: [</div>
<div class="t" style="left:420.8px;top:1254.5px;font-size:14px;color:#8a8c94;font-family:'Liberation Mono',monospace">31</div>
<div class="t" style="left:461.5px;top:1254.8px;font-size:13.2px;color:#d4d4d4;font-family:'Liberation Mono',monospace;white-space:pre">            {</div>
<div class="abs" style="left:1386px;top:568px;width:1px;height:722px;background:#282933;border-radius:0px;"></div>
<div class="t" style="left:1404px;top:590.5px;font-size:13px;color:#d8d8dc;font-weight:400;">校验响应</div>
<svg style="left:1462px;top:591.5px;" width="11" height="11" viewBox="0 0 11 11"><circle cx="5.5" cy="5.5" r="5" fill="none" stroke="#55575f" stroke-width="1"/><path d="M3.8 4.2 A1.7 1.7 0 1 1 5.5 6 V7" fill="none" stroke="#55575f" stroke-width="1"/><circle cx="5.5" cy="8.6" r="0.6" fill="#55575f"/></svg>
<div class="abs" style="left:1484px;top:588.5px;width:28px;height:16px;background:#139fd0;border-radius:8px;"></div>
<div class="abs" style="left:1497.5px;top:590.5px;width:12px;height:12px;background:#1b1b23;border-radius:6px;"></div>
<div class="t" style="left:1530px;top:590.8px;font-size:13.8px;color:#c8cad0;font-weight:400;">Get silences respon...</div>
<svg style="left:1677px;top:593px;" width="11" height="7" viewBox="0 0 11 7"><path d="M0.6 0.6 L5.5 6 L10.4 0.6" fill="none" stroke="#6c6e76" stroke-width="1.1"/></svg>
<div class="abs" style="left:1403px;top:625.5px;width:298px;height:41px;background:#23242d;border-radius:6px;"></div>
<div class="t" style="left:1417px;top:639.7px;font-size:16px;color:#4db91d;font-weight:400;">200</div>
<div class="t" style="left:1459px;top:639.7px;font-size:16px;color:#4db91d;font-weight:400;">8 ms</div>
<div class="t" style="left:1506.5px;top:639.7px;font-size:16px;color:#4db91d;font-weight:400;">620 B</div>
<div class="abs" style="left:1403px;top:676.5px;width:298px;height:41px;background:#23242d;border-radius:6px;"></div>
<svg style="left:1416px;top:689px;" width="16" height="16" viewBox="0 0 16 16"><circle cx="8" cy="8" r="8" fill="#52c41a"/><path d="M4.3 8.2 L7 10.8 L11.8 5.5" fill="none" stroke="#16301a" stroke-width="1.8"/></svg>
<div class="t" style="left:1437px;top:689.9px;font-size:15.2px;color:#e0e0e4;font-weight:400;">返回数据结构校验通过</div>
<div class="abs" style="left:386px;top:1290px;width:1334px;height:1px;background:#282933;border-radius:0px;"></div>
<svg style="left:407px;top:1305px;" width="12" height="10" viewBox="0 0 12 10"><path d="M5.5 0.8 L1.5 5 L5.5 9.2 M10.5 0.8 L6.5 5 L10.5 9.2" fill="none" stroke="#d0d2d8" stroke-width="1.5"/></svg>
<div class="abs" style="left:439px;top:1297px;width:141px;height:26px;background:#262833;border-radius:5px;"></div>
<div class="abs" style="left:509px;top:1297px;width:71px;height:26px;background:#3b3e50;border-radius:5px;"></div>
<div class="t" style="left:448px;top:1303.5px;font-size:13px;color:#c2c4ca;font-weight:400;">文档模式</div>
<div class="t" style="left:518px;top:1303.5px;font-size:13px;color:#e6e6ea;font-weight:400;">调试模式</div>
<svg style="left:1523px;top:1302px;" width="15" height="15" viewBox="0 0 15 15"><path d="M7.5 1 A6.5 6.5 0 1 0 14 7.5 A2.5 2.5 0 0 1 11 5 A2.5 2.5 0 0 1 8.5 2.5 A1.5 1.5 0 0 1 7.5 1 Z" fill="none" stroke="#c8cad0" stroke-width="1.2"/><circle cx="5" cy="6" r="0.9" fill="#c8cad0"/><circle cx="6" cy="10" r="0.9" fill="#c8cad0"/><circle cx="10" cy="10" r="0.9" fill="#c8cad0"/></svg>
<div class="t" style="left:1542.5px;top:1303.8px;font-size:13.8px;color:#c8cad0;font-weight:400;">Cookie</div>
<div class="t" style="left:1588px;top:1303.2px;font-size:13.5px;color:#c8cad0;font-weight:400;">管理</div>
<svg style="left:1638px;top:1302px;" width="15" height="15" viewBox="0 0 15 15"><path d="M5 1 L1 3.5 L2.5 7 L4 6.2 V14 H11 V6.2 L12.5 7 L14 3.5 L10 1 A2.5 2.5 0 0 1 5 1 Z" fill="none" stroke="#c8cad0" stroke-width="1.2" stroke-linejoin="round"/></svg>
<svg style="left:1673px;top:1302.5px;" width="15" height="15" viewBox="0 0 15 15"><circle cx="7.5" cy="7.5" r="6.8" fill="none" stroke="#c8cad0" stroke-width="1.2"/><path d="M5.5 6 A2 2 0 1 1 7.5 8 V9.5" fill="none" stroke="#c8cad0" stroke-width="1.2"/><circle cx="7.5" cy="11.5" r="0.8" fill="#c8cad0"/></svg>
<div class="abs" style="left:0;top:0;width:1720px;height:1330px;border-radius:9px;box-shadow:inset 0 0 0 1px #55575e;pointer-events:none"></div>
</div></body></html>
